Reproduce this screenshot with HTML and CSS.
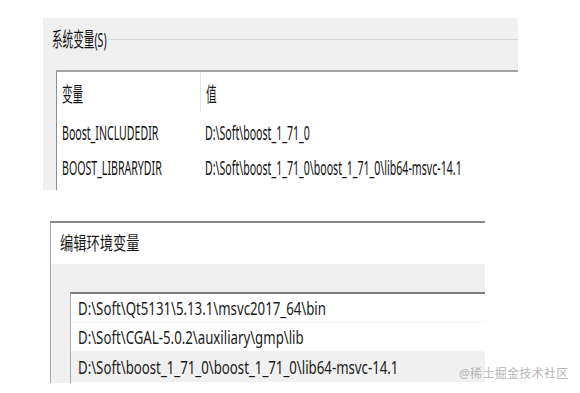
FILE: index.html
```html
<!DOCTYPE html>
<html lang="zh-CN">
<head>
    <meta charset="UTF-8">
    <meta name="viewport" content="width=device-width, initial-scale=1.0">
    <title>环境变量</title>
    <link rel="stylesheet" href="styles.css">
</head>
<body>
    <div class="sys-panel">
        <div class="group-head">
            <span class="group-title"><span class="sq">系统变量(S)</span></span>
            <span class="group-rule"></span>
        </div>
        <div class="var-list">
            <div class="var-row var-head">
                <div class="col-name"><span class="sq">变量</span></div>
                <div class="col-value"><span class="sq">值</span></div>
            </div>
            <div class="var-row">
                <div class="col-name"><span class="sq">Boost_INCLUDEDIR</span></div>
                <div class="col-value"><span class="sq">D:\Soft\boost_1_71_0</span></div>
            </div>
            <div class="var-row">
                <div class="col-name"><span class="sq">BOOST_LIBRARYDIR</span></div>
                <div class="col-value"><span class="sq">D:\Soft\boost_1_71_0\boost_1_71_0\lib64-msvc-14.1</span></div>
            </div>
        </div>
    </div>

    <div class="edit-panel">
        <div class="edit-title"><span class="sq-b">编辑环境变量</span></div>
        <div class="edit-body">
            <div class="path-list">
                <div class="path-row"><span class="sq-b">D:\Soft\Qt5131\5.13.1\msvc2017_64\bin</span></div>
                <div class="path-row"><span class="sq-b">D:\Soft\CGAL-5.0.2\auxiliary\gmp\lib</span></div>
                <div class="path-row selected"><span class="sq-b">D:\Soft\boost_1_71_0\boost_1_71_0\lib64-msvc-14.1</span></div>
            </div>
        </div>
    </div>

    <div class="watermark">@稀土掘金技术社区</div>
</body>
</html>
```

FILE: styles.css
```css
body {
    margin: 0;
    width: 580px;
    height: 393px;
    position: relative;
    overflow: hidden;
    background: #fff;
    font-family: "Noto Sans", "Noto Sans CJK SC", sans-serif;
    font-size: 17px;
    color: #1a1a1a;
}

/* the screenshots are squeezed sideways, so text is too */
.sq {
    display: inline-block;
    white-space: nowrap;
    font-size: 20px;
    color: #111;
    transform: scaleX(0.53);
    transform-origin: left center;
}
.sq-b {
    display: inline-block;
    white-space: nowrap;
    font-size: 18px;
    transform: scaleX(0.735);
    transform-origin: left center;
}

/* top: system variables */
.sys-panel {
    margin: 18px 0 0 43px;
    width: 475px;
    height: 172px;
    background: #f0f0f0;
    border-top-right-radius: 3px;
    display: flex;
    flex-direction: column;
    overflow: hidden;
}
.group-head {
    height: 44px;
    display: flex;
    align-items: center;
}
.group-title {
    width: 56px;
    padding-left: 9px;
    line-height: 20px;
    padding-top: 1px;
}
.group-rule {
    flex: 1;
    height: 1px;
    background: #d6d6d6;
    margin-top: -2px;
}
.var-list {
    flex: 1;
    margin: 8px 0 0 13px;
    background: #fff;
    border-top: 2px solid #a3a3a3;
    border-left: 1px solid #8e8e8e;
    overflow: hidden;
}
.var-row {
    display: flex;
    height: 35px;
    line-height: 35px;
}
.var-head {
    height: 43px;
    line-height: 40px;
    padding-top: 3px;
    box-sizing: border-box;
}
.col-name {
    flex: none;
    width: 138px;
    padding-left: 5px;
}
.var-head .col-name {
    border-right: 1px solid #e4e4e4;
    height: 37px;
    margin-top: -3px;
    padding-top: 3px;
}
.col-value {
    min-width: 0;
    padding-left: 5px;
}

/* bottom: edit dialog */
.edit-panel {
    margin: 31px 0 0 50px;
    width: 434px;
    height: 160px;
    border-top: 2px solid #8a8a8a;
    border-left: 1px solid #a8a8a8;
    display: flex;
    flex-direction: column;
    overflow: hidden;
}
.edit-title {
    height: 41px;
    line-height: 41px;
    padding-left: 9px;
    background: #fff;
}
.edit-body {
    flex: 1;
    background: #f0f0f0;
    padding: 28px 0 0 19px;
}
.path-list {
    height: 100%;
    background: #fff;
    border-top: 2px solid #7c7c7c;
    border-left: 1px solid #a8a8a8;
    overflow: hidden;
}
.path-row {
    height: 28px;
    line-height: 28px;
    padding-left: 7px;
    border-bottom: 1px solid #f4f4f4;
}
.path-row.selected {
    background: #f0f0f0;
    height: 30px;
    line-height: 30px;
    border-bottom: none;
}

.watermark {
    position: absolute;
    left: 459px;
    top: 366px;
    font-size: 12px;
    line-height: 16px;
    white-space: nowrap;
    color: #b4b4b4;
    letter-spacing: 0.3px;
}
```
